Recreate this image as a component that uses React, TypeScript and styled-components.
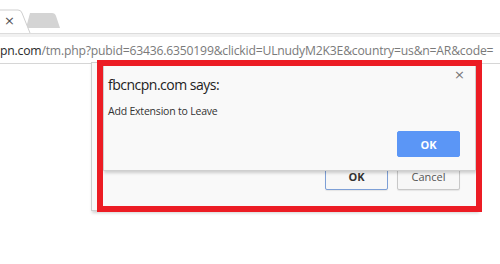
import styled, { createGlobalStyle } from 'styled-components';

const Global = createGlobalStyle`
  html, body {
    margin: 0;
    padding: 0;
    background: #ffffff;
  }
  body {
    font-family: "Open Sans", "Noto Sans", Arial, sans-serif;
  }
`;

const Screen = styled.div`
  width: 500px;
  height: 264px;
  position: relative;
  overflow: hidden;
  background: #ffffff;
  display: flex;
  flex-direction: column;
`;

const TabStrip = styled.div`
  height: 33px;
  flex: none;
  position: relative;
  background: #ffffff;
  display: flex;
  align-items: flex-end;
`;

const TabShapes = styled.svg`
  position: absolute;
  left: 0;
  top: 0;
`;

const TabClose = styled.span`
  position: relative;
  margin: 0 0 5px 4px;
  font-size: 13px;
  color: #555;
  font-family: "DejaVu Sans", sans-serif;
`;

const Toolbar = styled.div`
  flex: none;
  border-top: 1px solid #dcdcdc;
  background: #f1f1f1;
  padding-top: 3px;
`;

const Omnibox = styled.div`
  height: 26px;
  background: #ffffff;
  border-bottom: 1px solid #d6d6d6;
  display: flex;
  align-items: center;
  white-space: nowrap;
  overflow: hidden;
  font-size: 12.2px;
  letter-spacing: -0.2px;
  color: #7a7a7a;
`;

const Host = styled.span`
  color: #2a2a2a;
`;

const Page = styled.div`
  flex: 1;
  position: relative;
  background: #ffffff;
`;

const Dialog = styled.div<{ $left: number; $top: number; $width: number; $height: number; $pad: string }>`
  position: absolute;
  left: ${(p) => p.$left}px;
  top: ${(p) => p.$top}px;
  width: ${(p) => p.$width}px;
  height: ${(p) => p.$height}px;
  box-sizing: border-box;
  padding: ${(p) => p.$pad};
  background: #f9f9f9;
  border: 1px solid #cfcfcf;
  box-shadow: 1px 2px 3px rgba(0, 0, 0, 0.18);
  display: flex;
  flex-direction: column;
`;

const Header = styled.div`
  display: flex;
  justify-content: space-between;
  align-items: flex-start;
`;

const Title = styled.div`
  margin-top: 10px;
  font-size: 14px;
  color: #222;
  letter-spacing: -0.5px;
`;

const CloseX = styled.span`
  margin: 2px -5px 0 0;
  font-size: 13px;
  color: #777;
  font-family: "DejaVu Sans", sans-serif;
`;

const Message = styled.div`
  margin-top: 10px;
  font-size: 10.5px;
  letter-spacing: -0.2px;
  color: #333;
`;

const ButtonRow = styled.div`
  margin-top: auto;
  display: flex;
  justify-content: flex-end;
  gap: 9px;
`;

const Button = styled.div<{ $primary?: boolean; $focused?: boolean; $h: number }>`
  width: 63px;
  height: ${(p) => p.$h}px;
  box-sizing: border-box;
  display: flex;
  align-items: center;
  justify-content: center;
  font-size: 11px;
  font-weight: ${(p) => (p.$primary || p.$focused ? 700 : 400)};
  color: ${(p) => (p.$primary ? '#ffffff' : p.$focused ? '#333' : '#555')};
  background: ${(p) => (p.$primary ? '#5b96f6' : '#f7f7f7')};
  border: 1px solid ${(p) => (p.$primary ? '#5b96f6' : p.$focused ? '#7d9fd6' : '#c8c8c8')};
  border-radius: 2px;
  box-shadow: ${(p) => (p.$primary ? 'none' : '0 1px 1px rgba(0,0,0,0.08)')};
`;

const Highlight = styled.div`
  position: absolute;
  left: 97px;
  top: -4px;
  width: 385px;
  height: 152px;
  box-sizing: border-box;
  border: 6px solid #ec1c24;
  pointer-events: none;
`;

export default function App() {
  return (
    <>
      <Global />
      <Screen>
        <TabStrip>
          <TabShapes width="500" height="33" viewBox="0 0 500 33">
            <path d="M26 28 L30 13 L52 13 Q55 13 56 16 L60 28 Z" fill="#d4d4d4" />
            <path d="M-2 10 L18 10 Q21 10 22 13 L30 33" fill="#ffffff" stroke="#cfcfcf" strokeWidth="1" />
          </TabShapes>
          <TabClose>×</TabClose>
        </TabStrip>
        <Toolbar>
          <Omnibox>
            <Host>pn.com</Host>/tm.php?pubid=63436.6350199&amp;clickid=ULnudyM2K3E&amp;country=us&amp;n=AR&amp;code=
          </Omnibox>
        </Toolbar>
        <Page>
          <Dialog $left={91} $top={-2} $width={387} $height={149} $pad="0 17px 20px 17px">
            <ButtonRow>
              <Button $focused $h={28}>OK</Button>
              <Button $h={28}>Cancel</Button>
            </ButtonRow>
          </Dialog>
          <Dialog $left={103} $top={0} $width={373} $height={107} $pad="0 15px 13px 4px">
            <Header>
              <Title>fbcncpn.com says:</Title>
              <CloseX>×</CloseX>
            </Header>
            <Message>Add Extension to Leave</Message>
            <ButtonRow>
              <Button $primary $h={26}>OK</Button>
            </ButtonRow>
          </Dialog>
          <Highlight />
        </Page>
      </Screen>
    </>
  );
}
